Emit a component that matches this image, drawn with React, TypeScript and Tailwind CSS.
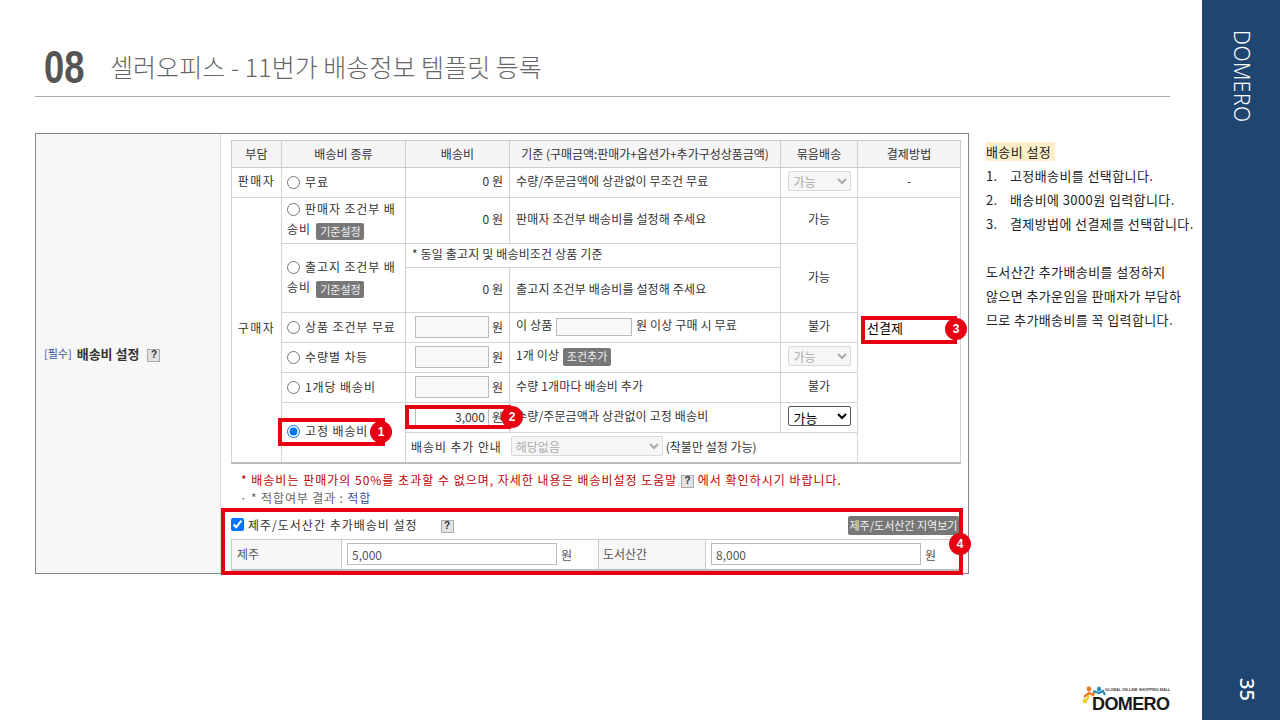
const ko = "font-['Noto_Sans_CJK_KR','Liberation_Sans',sans-serif]";

function Help() {
  return (
    <span className="inline-flex h-[13px] w-[13px] items-center justify-center border border-[#aaaaaa] bg-[#e2e2e2] align-middle font-['Liberation_Sans',sans-serif] text-[10px] leading-none font-bold tracking-normal text-[#333]">
      ?
    </span>
  );
}

function GrayBtn({ children, className = "" }: { children: React.ReactNode; className?: string }) {
  return (
    <span className={`inline-flex items-center justify-center rounded-[2px] bg-[#777777] text-[11px] leading-none tracking-normal text-[#f2f2f2] ${className}`}>
      {children}
    </span>
  );
}

function Radio({ label, checked = false }: { label: React.ReactNode; checked?: boolean }) {
  return (
    <label className="block tracking-[0.9px]">
      <input type="radio" name="fee" defaultChecked={checked} className="mr-[5px] ml-[5px] h-[13px] w-[13px] align-[-2px]" />
      {label}
    </label>
  );
}

function Amount() {
  return (
    <div className="flex items-center justify-end pr-[6px] pl-[9px]">
      <input readOnly className="mr-[3px] h-[22px] w-[74px] border border-[#bbbbbb] bg-[#f8f8f8]" />
      <span className="w-[13px]">원</span>
    </div>
  );
}

function Mark({ n, className }: { n: number; className: string }) {
  return (
    <span className={`absolute flex h-[22px] w-[22px] items-center justify-center rounded-full bg-[#e60012] font-['Liberation_Sans',sans-serif] text-[12px] font-bold text-white ${className}`}>
      {n}
    </span>
  );
}

function Logo() {
  return (
    <div className="relative mt-auto mr-[32px] mb-[8px] h-[26px] w-[88px] self-end">
      <svg viewBox="0 0 30 24" className="absolute top-0 left-0 h-[24px] w-[30px]">
        <circle cx="7" cy="3" r="2.4" fill="#e8792b" />
        <path d="M2 11 L7 7 L11 9 L13 5" stroke="#e8792b" strokeWidth="2.4" fill="none" />
        <circle cx="17" cy="3" r="2.2" fill="#2a8fc4" />
        <path d="M11 5 L17 7 L21 5 L23 9" stroke="#2a8fc4" strokeWidth="2.2" fill="none" />
        <circle cx="3" cy="15" r="2.4" fill="#e5d325" />
        <path d="M7 9 L5 14" stroke="#e5d325" strokeWidth="2.2" fill="none" />
      </svg>
      <span className="absolute top-[1px] left-[23px] font-['Liberation_Sans',sans-serif] text-[3.8px] leading-[6px] font-bold whitespace-nowrap text-[#444]">
        GLOBAL ON-LINE SHOPPING MALL
      </span>
      <span className="absolute top-[8px] left-[10px] font-['Liberation_Sans',sans-serif] text-[18px] leading-[20px] font-bold tracking-[-0.6px] text-[#1a1a1a]">
        DOMERO
      </span>
    </div>
  );
}

const th = "border border-[#cccccc] bg-[#f5f5f5] pb-px text-center font-normal tracking-[0.1px]";
const thLong = "border border-[#cccccc] bg-[#f5f5f5] pb-px text-center font-normal tracking-[-0.03px]";
const td = "border border-[#d4d4d4] p-0 pb-[2px]";
const tdText = "border border-[#d4d4d4] px-[6px] py-0 pb-[3px] tracking-[0.15px]";
const tdCenter = "border border-[#d4d4d4] p-0 pb-[3px] text-center";
const tdFee = "border border-[#d4d4d4] px-[6px] py-0 pb-[3px] text-right";

export default function App() {
  return (
    <div className={`flex h-[720px] w-[1280px] overflow-hidden bg-white text-[12px] text-[#333] ${ko}`}>
      <div className="flex w-[1202px] flex-col">
        <header className="mt-[33px] -mb-px ml-[35px] mr-[32px] flex h-[64px] items-center gap-[25px] border-b border-[#aaaaaa] pt-[4px] pl-[9px]">
          <span className="w-[41px] origin-left scale-x-[0.79] font-['Liberation_Sans',sans-serif] text-[46px] leading-none font-bold text-[#555555]">08</span>
          <h1 className="text-[25px] leading-none font-light tracking-[0.05px] text-[#666666]">셀러오피스 - 11번가 배송정보 템플릿 등록</h1>
        </header>

        <div className="mt-[37px] ml-[35px] flex items-start">
          <div className="relative flex h-[441px] w-[934px] shrink-0 border border-[#888888]">
            <div className="flex w-[185px] shrink-0 items-center gap-[5px] border-r border-[#dddddd] bg-[#f7f7f7] pl-[8px] text-[11px]">
              <span className="text-[#34509a]">[필수]</span>
              <b className="text-[13px] font-bold text-[#333]">배송비 설정</b>
              <span className="ml-[3px]"><Help /></span>
            </div>

            <div className="flex-1 pt-[6px] pl-[10px]">
              <table className="w-[729px] table-fixed border-collapse border-r border-b-2 border-[#bbbbbb]">
                <colgroup>
                  <col className="w-[50px]" />
                  <col className="w-[124px]" />
                  <col className="w-[104px]" />
                  <col className="w-[271px]" />
                  <col className="w-[77px]" />
                  <col className="w-[103px]" />
                </colgroup>
                <tbody>
                  <tr className="h-[27px]">
                    <th className={th}>부담</th>
                    <th className={th}>배송비 종류</th>
                    <th className={th}>배송비</th>
                    <th className={thLong}>기준 (구매금액:판매가+옵션가+추가구성상품금액)</th>
                    <th className={th}>묶음배송</th>
                    <th className={th}>결제방법</th>
                  </tr>
                  <tr className="h-[30px]">
                    <td className={`${tdCenter} tracking-[1.5px]`}>판매자</td>
                    <td className={td}><Radio label="무료" /></td>
                    <td className={tdFee}>0 원</td>
                    <td className={tdText}>수량/주문금액에 상관없이 무조건 무료</td>
                    <td className={tdCenter}>
                      <select disabled className="h-[20px] w-[63px] rounded-[2px] border border-[#d8d8d8] bg-[#f6f6f6] pl-[1px] text-[12px] text-[#aaaaaa]"><option>가능</option></select>
                    </td>
                    <td className={tdCenter}>-</td>
                  </tr>
                  <tr className="h-[46px]">
                    <td rowSpan={8} className={`${tdCenter} tracking-[1.5px]`}>구매자</td>
                    <td className={`${td} leading-[20px]`}>
                      <Radio label={<>판매자 조건부 배<br /><span className="ml-[5px]">송비</span> <GrayBtn className="ml-[2px] h-[17px] w-[48px] align-[-2px]">기준설정</GrayBtn></>} />
                    </td>
                    <td className={tdFee}>0 원</td>
                    <td className={tdText}>판매자 조건부 배송비를 설정해 주세요</td>
                    <td className={tdCenter}>가능</td>
                    <td rowSpan={8} className={`${td} align-top`}>
                      <div className="mt-[120px] pl-[5px]">
                        <select className="h-[20px] w-[84px] appearance-none bg-white pl-[4px] text-[13px] text-black"><option>선결제</option></select>
                      </div>
                    </td>
                  </tr>
                  <tr className="h-[24px]">
                    <td rowSpan={2} className={`${td} leading-[20px]`}>
                      <Radio label={<>출고지 조건부 배<br /><span className="ml-[5px]">송비</span> <GrayBtn className="ml-[2px] h-[17px] w-[48px] align-[-2px]">기준설정</GrayBtn></>} />
                    </td>
                    <td colSpan={2} className={tdText}>* 동일 출고지 및 배송비조건 상품 기준</td>
                    <td rowSpan={2} className={tdCenter}>가능</td>
                  </tr>
                  <tr className="h-[45px]">
                    <td className={tdFee}>0 원</td>
                    <td className={tdText}>출고지 조건부 배송비를 설정해 주세요</td>
                  </tr>
                  <tr className="h-[30px]">
                    <td className={td}><Radio label="상품 조건부 무료" /></td>
                    <td className={td}><Amount /></td>
                    <td className={tdText}>
                      이 상품 <input readOnly className="mx-[1px] h-[18px] w-[76px] border border-[#bbbbbb] bg-[#f8f8f8] align-middle" /> 원 이상 구매 시 무료
                    </td>
                    <td className={tdCenter}>불가</td>
                  </tr>
                  <tr className="h-[30px]">
                    <td className={td}><Radio label="수량별 차등" /></td>
                    <td className={td}><Amount /></td>
                    <td className={tdText}>
                      1개 이상 <GrayBtn className="ml-[1px] h-[18px] w-[48px] align-middle">조건추가</GrayBtn>
                    </td>
                    <td className={tdCenter}>
                      <select disabled className="h-[20px] w-[63px] rounded-[2px] border border-[#d8d8d8] bg-[#f6f6f6] pl-[1px] text-[12px] text-[#aaaaaa]"><option>가능</option></select>
                    </td>
                  </tr>
                  <tr className="h-[30px]">
                    <td className={td}><Radio label="1개당 배송비" /></td>
                    <td className={td}><Amount /></td>
                    <td className={tdText}>수량 1개마다 배송비 추가</td>
                    <td className={tdCenter}>불가</td>
                  </tr>
                  <tr className="h-[30px]">
                    <td rowSpan={2} className={td}><Radio label="고정 배송비" checked /></td>
                    <td className={td}>
                      <div className="flex items-center justify-end pr-[6px] pl-[9px]">
                        <input readOnly value="3,000" className="mr-[3px] h-[22px] w-[74px] border border-[#bbbbbb] bg-white pr-[3px] text-right text-[12px]" />
                        <span className="w-[13px]">원</span>
                      </div>
                    </td>
                    <td className={tdText}>수량/주문금액과 상관없이 고정 배송비</td>
                    <td className={tdCenter}>
                      <select className="h-[20px] w-[63px] rounded-[2px] border border-[#555555] bg-white pl-[1px] text-[13px] text-black"><option>가능</option></select>
                    </td>
                  </tr>
                  <tr className="h-[30px]">
                    <td colSpan={3} className={`${td} pl-[5px]`}>
                      <span className="tracking-[0.9px]">배송비 추가 안내</span>
                      <select disabled className="mr-[3px] ml-[9px] h-[20px] w-[152px] rounded-[2px] border border-[#d8d8d8] bg-[#f6f6f6] text-[12px] text-[#aaaaaa]"><option>해당없음</option></select>
                      (착불만 설정 가능)
                    </td>
                  </tr>
                </tbody>
              </table>

              <p className="mt-[7px] pl-[10px] leading-[18px] tracking-[1px] text-[#c00000]">
                * 배송비는 판매가의 50%를 초과할 수 없으며, 자세한 내용은 배송비설정 도움말 <Help /> 에서 확인하시기 바랍니다.
              </p>
              <p className="pl-[9px] leading-[18px] tracking-[0.85px] text-[#666666]">
                · * 적합여부 결과 : <span className="text-[#34509a]">적합</span>
              </p>

              <div className="mt-[9px] flex h-[23px] w-[728px] items-start justify-between">
                <label className="flex items-center tracking-[1px]">
                  <input type="checkbox" defaultChecked className="mr-[4px] h-[13px] w-[13px]" />
                  제주/도서산간 추가배송비 설정
                  <span className="ml-[23px]"><Help /></span>
                </label>
                <GrayBtn className="h-[19px] w-[111px]">제주/도서산간 지역보기</GrayBtn>
              </div>
              <table className="w-[729px] table-fixed border-collapse border-b-2 border-[#bbbbbb] text-[#555]">
                <colgroup>
                  <col className="w-[110px]" />
                  <col className="w-[257px]" />
                  <col className="w-[107px]" />
                  <col className="w-[255px]" />
                </colgroup>
                <tbody>
                  <tr className="h-[31px]">
                    <td className="border border-[#cccccc] bg-[#f7f7f7] pl-[5px]">제주</td>
                    <td className="border-y border-[#cccccc] pl-[5px]">
                      <input readOnly value="5,000" className="h-[22px] w-[210px] border border-[#bbbbbb] pl-[4px] text-[12px]" />
                      <span className="ml-[4px]">원</span>
                    </td>
                    <td className="border border-[#cccccc] bg-[#f7f7f7] pl-[4px]">도서산간</td>
                    <td className="border-y border-[#cccccc] pl-[5px]">
                      <input readOnly value="8,000" className="h-[22px] w-[210px] border border-[#bbbbbb] pl-[4px] text-[12px]" />
                      <span className="ml-[4px]">원</span>
                    </td>
                  </tr>
                </tbody>
              </table>
            </div>

            {/* red call-outs drawn over the form */}
            <div className="absolute top-[284px] left-[242px] h-[28px] w-[107px] border-4 border-[#e60012]" />
            <div className="absolute top-[271px] left-[369px] h-[24px] w-[106px] border-4 border-[#e60012]" />
            <div className="absolute top-[182px] left-[825px] h-[28px] w-[96px] border-4 border-[#e60012]" />
            <div className="absolute top-[374px] left-[185px] h-[67px] w-[742px] border-4 border-[#e60012]" />
            <Mark n={1} className="top-[287px] left-[334px]" />
            <Mark n={2} className="top-[272px] left-[465px]" />
            <Mark n={3} className="top-[184px] left-[909px]" />
            <Mark n={4} className="top-[399px] left-[913px]" />
          </div>

          <div className="ml-[17px] pt-[7px] text-[13px] leading-[24px] tracking-[0.4px] whitespace-nowrap text-[#222]">
            <p><span className="bg-[#fdeec8] pr-[4px]">배송비 설정</span></p>
            <ol>
              <li className="flex"><span className="w-[24px]">1.</span>고정배송비를 선택합니다.</li>
              <li className="flex"><span className="w-[24px]">2.</span>배송비에 3000원 입력합니다.</li>
              <li className="flex"><span className="w-[24px]">3.</span>결제방법에 선결제를 선택합니다.</li>
            </ol>
            <p className="mt-[24px]">도서산간 추가배송비를 설정하지<br />않으면 추가운임을 판매자가 부담하<br />므로 추가배송비를 꼭 입력합니다.</p>
          </div>
        </div>

        <Logo />
      </div>

      <aside className="flex w-[78px] flex-col items-center justify-between bg-[#1f4571] pt-[30px] pb-[19px] text-white">
        <span className="font-['Noto_Sans','Liberation_Sans',sans-serif] text-[21px] leading-none font-light tracking-[0.5px] [writing-mode:vertical-rl]">DOMERO</span>
        <span className="mr-[23px] self-end font-['Noto_Sans','Liberation_Sans',sans-serif] text-[20px] leading-none font-medium [writing-mode:vertical-rl]">35</span>
      </aside>
    </div>
  );
}
